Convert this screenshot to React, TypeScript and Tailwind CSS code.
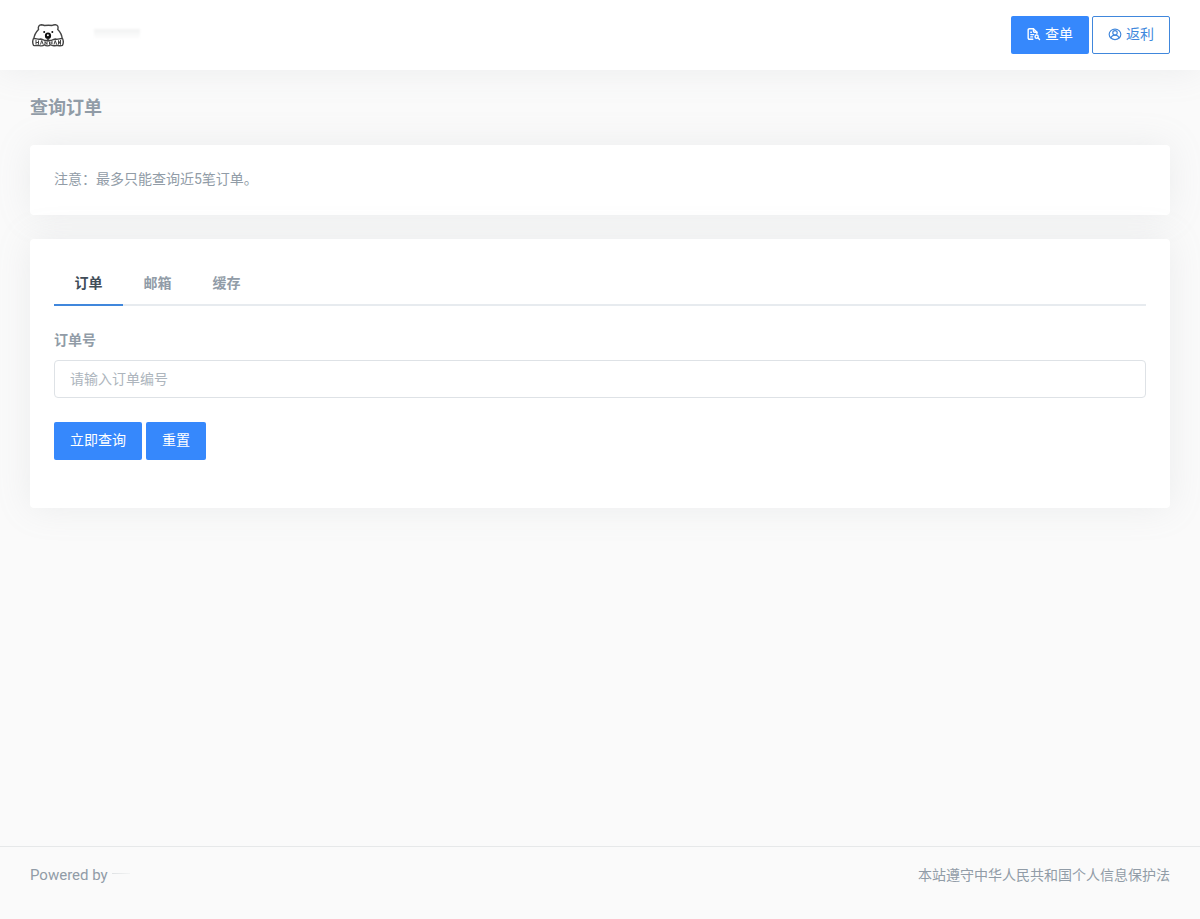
import { useState } from "react";

const tabs = [
  { id: "order", name: "订单", label: "订单号", placeholder: "请输入订单编号" },
  { id: "email", name: "邮箱", label: "邮箱", placeholder: "请输入邮箱" },
  { id: "cache", name: "缓存", label: "缓存", placeholder: "请输入缓存编号" },
];

const card = "rounded-sm bg-white px-6 shadow-[0_0_35px_0_rgba(154,161,171,0.15)]";
const primary =
  "h-[38px] rounded-xs bg-[#3688fc] pb-0.5 text-white hover:bg-[#2e74d6]";

function Logo() {
  return (
    <svg viewBox="0 0 32 24" className="h-6 w-8" fill="none" stroke="#444" aria-hidden="true">
      <path
        d="M1.800 16C2.300 11.500 4 9 6.500 6.500C5.800 3.500 7 1.800 9.500 1.700C11 1.700 11.800 2.300 12.500 2.500C15 2.200 18 2.200 20 2.500C20.800 2 22 1.600 23.500 1.700C26 2 26.500 4 25.800 6.500C28.300 9 30 12 30.200 16"
        strokeWidth="1.400"
        fill="#fff"
      />
      <path
        d="M1.500 15.500C.6 17.500 .6 20.500 1.500 22.300C3.500 23.200 5 22.200 7 22.300C9 23.200 11 23 12.500 21.800C14 23.200 17 23.200 18.500 21.800C20.500 23.200 22.500 23 24.500 22.300C26.500 22.500 28.500 23.200 30.500 22.300C31.400 20.500 31.400 17.500 30.500 15.500C28 15 26 17 23.500 16C21.500 16 20 17.500 18.500 17.500H13.500C12 17.500 10.500 16 8.500 16C6 17 4 15 1.500 15.500Z"
        strokeWidth="1.400"
        fill="#fff"
      />
      <path
        d="M4 17v4.500M6.500 17.500v4M4 19.500h2.500M8.500 21.500l1.200-4l1.500 4M13 21.500v-3l2 3v-3M17.500 18.500v3M20 18v3.500M17.500 20H20M22 21.500l1.200-4l1.500 4M26.500 21.500v-4l2 4v-4.500"
        strokeWidth="1"
      />
      <ellipse cx="16" cy="12.800" rx="3.100" ry="3.300" fill="#111" stroke="none" />
      <path d="M16 15.500v3" strokeWidth="1.800" />
      <circle cx="15.900" cy="12.300" r="1" fill="#fff" stroke="none" />
      <circle cx="12.200" cy="9" r="1" fill="#111" stroke="none" />
      <circle cx="20.300" cy="9" r="1" fill="#111" stroke="none" />
    </svg>
  );
}

function FileSearchIcon() {
  return (
    <svg
      viewBox="0 0 24 24"
      className="size-[14px]"
      fill="none"
      stroke="currentColor"
      strokeWidth="2.400"
      strokeLinecap="round"
      strokeLinejoin="round"
      aria-hidden="true"
    >
      <path d="M10 21H4a2 2 0 0 1-2-2V5a2 2 0 0 1 2-2h7l6 6v2" />
      <path d="M11 3v4a2 2 0 0 0 2 2h4M6.500 9h1M6.500 13h5M6.500 17h3" />
      <circle cx="16.500" cy="16.500" r="2.700" />
      <path d="m18.500 18.500 3 3" />
    </svg>
  );
}

function UserCircleIcon() {
  return (
    <svg
      viewBox="0 0 24 24"
      className="size-[14px]"
      fill="none"
      stroke="currentColor"
      strokeWidth="2"
      strokeLinecap="round"
      aria-hidden="true"
    >
      <ellipse cx="12" cy="12.500" rx="10" ry="9" />
      <circle cx="12" cy="10" r="3.800" />
      <path d="M5 18.500C6.500 15 9 13.800 12 13.800S17.500 15 19 18.500" />
    </svg>
  );
}

export default function App() {
  const [active, setActive] = useState("order");
  const [query, setQuery] = useState("");
  const tab = tabs.find((item) => item.id === active) ?? tabs[0];

  return (
    <div className="flex min-h-screen flex-col bg-[#fafafa] font-['Roboto','Noto_Sans_CJK_SC',sans-serif] text-sm text-[#919ca7]">
      <header className="flex h-[70px] items-center justify-between bg-white px-[30px] shadow-[0_0_35px_0_rgba(154,161,171,0.15)]">
        <a href="#" aria-label="首页" className="flex items-center gap-[30px] pl-0.5">
          <Logo />
          <span className="mb-0.5 h-2.5 w-[46px] bg-linear-to-b from-[#f1f2f2] to-white blur-[1px]" />
        </a>
        <nav className="flex gap-[3px]">
          <a
            href="#"
            className="flex h-[38px] w-[78px] items-center justify-center gap-1 rounded-xs bg-[#3688fc] pb-0.5 text-white"
          >
            <FileSearchIcon />
            查单
          </a>
          <a
            href="#"
            className="flex h-[38px] w-[78px] items-center justify-center gap-1 rounded-xs border border-[#4087dc] bg-white pb-0.5 text-[#4087dc]"
          >
            <UserCircleIcon />
            返利
          </a>
        </nav>
      </header>

      <main className="grow px-[30px] pb-6">
        <h1 className="text-lg leading-[75px] font-bold">查询订单</h1>

        <section className={`${card} py-6`}>
          <p className="pb-0.5 leading-5">注意：最多只能查询近5笔订单。</p>
        </section>

        <section className={`${card} mt-6 pt-6 pb-12`}>
          <div role="tablist" className="flex border-b-2 border-[#e7ebef]">
            {tabs.map((item) => (
              <button
                key={item.id}
                type="button"
                role="tab"
                aria-selected={item.id === active}
                onClick={() => setActive(item.id)}
                className={`-mb-0.5 h-[43px] w-[69px] border-b-2 pb-0.5 font-bold ${
                  item.id === active
                    ? "border-[#4087dc] text-[#414d58]"
                    : "border-transparent"
                }`}
              >
                {item.name}
              </button>
            ))}
          </div>

          <form className="mt-6" onSubmit={(event) => event.preventDefault()}>
            <label htmlFor="query" className="mb-2 block pb-0.5 leading-5 font-bold">
              {tab.label}
            </label>
            <input
              id="query"
              type="text"
              value={query}
              onChange={(event) => setQuery(event.target.value)}
              placeholder={tab.placeholder}
              className="block h-[38px] w-full rounded-sm border border-[#dee2e6] bg-white px-[15px] text-[#6c757d] outline-none placeholder:text-[#adb5bd] focus:border-[#3688fc]"
            />
            <div className="mt-6 flex gap-1">
              <button type="submit" className={`${primary} w-[88px]`}>
                立即查询
              </button>
              <button type="button" onClick={() => setQuery("")} className={`${primary} w-[60px]`}>
                重置
              </button>
            </div>
          </form>
        </section>
      </main>

      <footer className="flex h-[73px] items-start justify-between border-t border-[#e6e8e9] px-[30px] pt-[17px] leading-[22px]">
        <p className="flex items-center gap-1 text-[15px]">
          Powered by
          <span className="mb-1 h-px w-[18px] bg-linear-to-r from-[#dfe2e4] to-[#f3f4f4]" />
        </p>
        <p>本站遵守中华人民共和国个人信息保护法</p>
      </footer>
    </div>
  );
}
